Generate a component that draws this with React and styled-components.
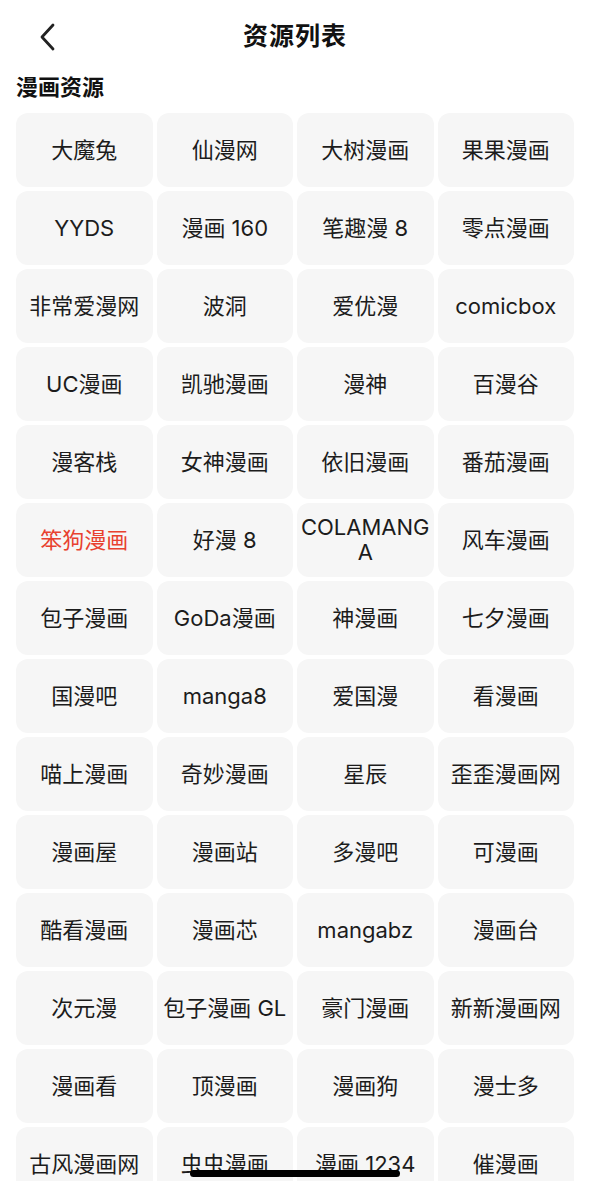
import React from 'react'
import styled, { createGlobalStyle } from 'styled-components'

const GlobalStyle = createGlobalStyle`
  html, body {
    margin: 0;
    padding: 0;
    background: #ffffff;
    overflow: hidden;
  }
  body {
    font-family: 'Inter', 'Noto Sans CJK SC', sans-serif;
    color: #1c1c1c;
  }
`

const Page = styled.div`
  width: 590px;
  height: 1181px;
  overflow: hidden;
  position: relative;
`

const Header = styled.div`
  height: 71px;
  position: relative;
  display: flex;
  align-items: center;
  justify-content: center;
  padding-bottom: 3px;
  box-sizing: border-box;
`

const BackButton = styled.button`
  position: absolute;
  left: 30px;
  top: 18px;
  width: 36px;
  height: 38px;
  border: none;
  background: transparent;
  padding: 0;
  display: flex;
  align-items: center;
  justify-content: center;
`

const Title = styled.h1`
  margin: 0;
  font-size: 25px;
  font-weight: 700;
  letter-spacing: 1px;
  color: #111;
  font-family: 'Noto Sans CJK SC', sans-serif;
`

const SectionLabel = styled.div`
  padding: 0 16px;
  font-size: 22px;
  line-height: 28px;
  font-weight: 700;
  color: #111;
  font-family: 'Noto Sans CJK SC', sans-serif;
`

const Grid = styled.div`
  display: grid;
  grid-template-columns: repeat(4, 1fr);
  gap: 4px;
  padding: 14px 16px 0;
`

const Cell = styled.div`
  height: 74px;
  background: #f6f6f6;
  border-radius: 12px;
  display: flex;
  align-items: center;
  justify-content: center;
  text-align: center;
  padding: 0 2px;
  box-sizing: border-box;
  font-size: 22px;
  line-height: 25px;
  word-break: break-all;
  color: ${p => (p.$active ? '#e8412f' : '#1c1c1c')};
`

const HomeBar = styled.div`
  position: absolute;
  left: 190px;
  bottom: 4px;
  width: 210px;
  height: 7px;
  border-radius: 4px;
  background: #000;
`

const sources = [
  '大魔兔', '仙漫网', '大树漫画', '果果漫画',
  'YYDS', '漫画 160', '笔趣漫 8', '零点漫画',
  '非常爱漫网', '波洞', '爱优漫', 'comicbox',
  'UC漫画', '凯驰漫画', '漫神', '百漫谷',
  '漫客栈', '女神漫画', '依旧漫画', '番茄漫画',
  '笨狗漫画', '好漫 8', 'COLAMANGA', '风车漫画',
  '包子漫画', 'GoDa漫画', '神漫画', '七夕漫画',
  '国漫吧', 'manga8', '爱国漫', '看漫画',
  '喵上漫画', '奇妙漫画', '星辰', '歪歪漫画网',
  '漫画屋', '漫画站', '多漫吧', '可漫画',
  '酷看漫画', '漫画芯', 'mangabz', '漫画台',
  '次元漫', '包子漫画 GL', '豪门漫画', '新新漫画网',
  '漫画看', '顶漫画', '漫画狗', '漫士多',
  '古风漫画网', '虫虫漫画', '漫画 1234', '催漫画',
]

const App = () => {
  const current = '笨狗漫画'

  return (
    <Page>
      <GlobalStyle />
      <Header>
        <BackButton aria-label="back">
          <svg width="24" height="32" viewBox="0 0 24 32" fill="none">
            <polyline points="17,4 6,16 17,28" stroke="#222" strokeWidth="2.8" strokeLinecap="round" strokeLinejoin="round" />
          </svg>
        </BackButton>
        <Title>资源列表</Title>
      </Header>
      <SectionLabel>漫画资源</SectionLabel>
      <Grid>
        {sources.map(name => (
          <Cell key={name} $active={name === current}>{name}</Cell>
        ))}
      </Grid>
      <HomeBar />
    </Page>
  )
}

export default App
